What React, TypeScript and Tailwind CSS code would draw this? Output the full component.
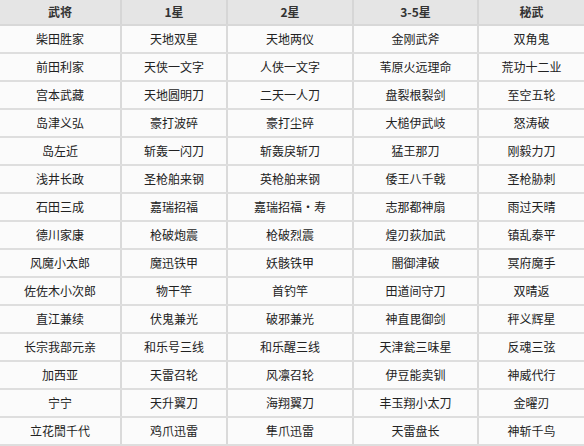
const headers = ['武将', '1星', '2星', '3-5星', '秘武'];

const rows: string[][] = [
  ['柴田胜家', '天地双星', '天地两仪', '金刚武斧', '双角鬼'],
  ['前田利家', '天侠一文字', '人侠一文字', '苇原火远理命', '荒功十二业'],
  ['宫本武藏', '天地圆明刀', '二天一人刀', '盘裂根裂剑', '至空五轮'],
  ['岛津义弘', '豪打波碎', '豪打尘碎', '大槌伊武岐', '怒涛破'],
  ['岛左近', '斩轰一闪刀', '斩轰戾斩刀', '猛王那刀', '刚毅力刀'],
  ['浅井长政', '圣枪舶来钢', '英枪舶来钢', '倭王八千戟', '圣枪胁刺'],
  ['石田三成', '嘉瑞招福', '嘉瑞招福・寿', '志那都神扇', '雨过天晴'],
  ['德川家康', '枪破炮震', '枪破烈震', '煌刃荻加武', '镇乱泰平'],
  ['风魔小太郎', '魔迅铁甲', '妖骸铁甲', '闇御津破', '冥府魔手'],
  ['佐佐木小次郎', '物干竿', '首钓竿', '田道间守刀', '双晴返'],
  ['直江兼续', '伏鬼兼光', '破邪兼光', '神直毘御剑', '秤义辉星'],
  ['长宗我部元亲', '和乐号三线', '和乐醒三线', '天津瓮三味星', '反魂三弦'],
  ['加西亚', '天雷召轮', '风凛召轮', '伊豆能卖钏', '神威代行'],
  ['宁宁', '天升翼刀', '海翔翼刀', '丰玉翔小太刀', '金曜刃'],
  ['立花誾千代', '鸡爪迅雷', '隼爪迅雷', '天雷盘长', '神斩千鸟'],
];

const cols = 'grid grid-cols-[122px_106px_126px_125px_105px]';

export default function App() {
  return (
    <div
      className="w-[584px] h-[446px] overflow-hidden bg-white text-[12px] text-[#222]"
      style={{ fontFamily: '"Noto Sans CJK SC", "Liberation Sans", sans-serif' }}
    >
      <div className={`${cols} h-[26px] bg-[#e5e5e5] border-b-2 border-[#d8d8d8]`}>
        {headers.map((h, i) => (
          <div
            key={h}
            className={`flex items-center justify-center font-bold text-[#333] ${i < 4 ? 'border-r-2 border-[#d6d6d6]' : ''}`}
          >
            {h}
          </div>
        ))}
      </div>
      {rows.map((r, ri) => (
        <div key={ri} className={`${cols} h-[28px] bg-[#fbfbfb] border-b-2 border-[#dedede]`}>
          {r.map((c, i) => (
            <div
              key={i}
              className={`flex items-center justify-center ${i < 4 ? 'border-r-2 border-[#dadada]' : ''}`}
            >
              {c}
            </div>
          ))}
        </div>
      ))}
    </div>
  );
}
